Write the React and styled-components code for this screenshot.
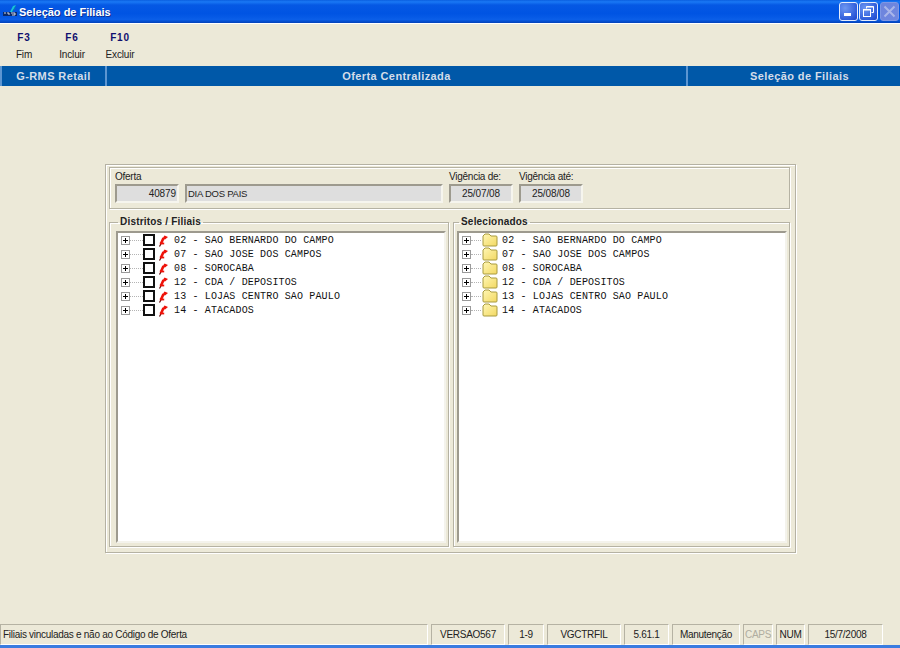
import React from "react";
import styled, { createGlobalStyle } from "styled-components";

const GlobalStyle = createGlobalStyle`
    html, body {
        margin: 0;
        padding: 0;
        background: #ece9d8;
    }
    * {
        box-sizing: border-box;
    }
`;

const Window = styled.div`
    width: 900px;
    height: 648px;
    display: flex;
    flex-direction: column;
    overflow: hidden;
    background: #ece9d8;
    font-family: "Liberation Sans", Arial, sans-serif;
    color: #111;
`;

const TitleBar = styled.div`
    height: 23px;
    flex: none;
    display: flex;
    align-items: center;
    padding: 0 1px 0 2px;
    background: linear-gradient(
        180deg,
        #0a5fe0 0%,
        #1a78f5 8%,
        #0558e4 22%,
        #0054e3 60%,
        #0a5ee8 85%,
        #0341b8 100%
    );
`;

const TitleText = styled.span`
    margin-left: 1px;
    flex: 1;
    color: #fff;
    font-size: 11px;
    font-weight: bold;
    text-shadow: 1px 1px 0 #0f2f90;
`;

const WinButton = styled.div`
    width: 19px;
    height: 19px;
    margin-left: ${props => (props.disabled ? "2px" : "1px")};
    display: flex;
    align-items: center;
    justify-content: center;
    border: 1px solid ${props => (props.disabled ? "#7f97e4" : "#e4ecfc")};
    border-radius: 3px;
    background: ${props =>
        props.disabled
            ? "linear-gradient(135deg, #6d84dc, #7088e0)"
            : "radial-gradient(circle at 30% 30%, #6c97f2, #2a58d8 75%, #2148c4)"};
`;

const Toolbar = styled.div`
    height: 43px;
    flex: none;
    display: flex;
    border-top: 1px solid #fff;
`;

const ToolButton = styled.div`
    width: 48px;
    display: flex;
    flex-direction: column;
    align-items: center;
    padding-top: 7px;
`;

const ToolKey = styled.span`
    height: 18px;
    font-size: 10px;
    line-height: 14px;
    font-weight: bold;
    letter-spacing: 0.8px;
    color: #10106e;
`;

const ToolLabel = styled.span`
    font-size: 10px;
    line-height: 12px;
    letter-spacing: -0.15px;
    color: #222;
`;

const HeaderBar = styled.div`
    height: 20px;
    flex: none;
    display: flex;
    background: #0058a8;
`;

const HeaderCell = styled.div`
    width: ${props => props.width}px;
    display: flex;
    align-items: center;
    justify-content: center;
    padding-left: ${props => (props.last ? "11px" : "0")};
    border-left: ${props => (props.first ? "2px" : "0")} solid #5c96d2;
    border-right: ${props => (props.last ? "0" : "2px")} solid #5c96d2;
    color: #d4dde8;
    font-size: 11px;
    font-weight: bold;
    letter-spacing: 0.4px;
`;

const Content = styled.div`
    flex: 1;
    padding: 78px 104px 0 105px;
`;

const Panel = styled.div`
    height: 389px;
    display: flex;
    flex-direction: column;
    padding: 2px 5px 5px 3px;
    border: 1px solid #b5b2a3;
    box-shadow: inset 1px 1px 0 #fff, 1px 1px 0 #fff;
`;

const TopGroup = styled.div`
    height: 42px;
    flex: none;
    display: flex;
    gap: 6px;
    padding: 2px 0 0 5px;
    border: 1px solid #b5b2a3;
    box-shadow: inset 1px 1px 0 #fff, 1px 1px 0 #fff;
`;

const FieldCol = styled.div`
    display: flex;
    flex-direction: column;
`;

const FieldLabel = styled.span`
    height: 14px;
    font-size: 10px;
    line-height: 13px;
    letter-spacing: -0.25px;
    color: #222;
`;

const FieldRow = styled.div`
    display: flex;
    gap: 6px;
`;

const Input = styled.div`
    width: ${props => props.width}px;
    height: 19px;
    padding: 0 1px;
    display: flex;
    align-items: center;
    justify-content: ${props => props.align || "flex-start"};
    background: #dedede;
    border-style: solid;
    border-width: 2px;
    border-color: #9d9a8e #f6f5ee #f6f5ee #9d9a8e;
    font-size: ${props => (props.tight ? "9.5px" : "10px")};
    letter-spacing: ${props => (props.tight ? "-0.25px" : "-0.1px")};
    color: #222;
`;

const Groups = styled.div`
    flex: 1;
    display: flex;
    gap: 4px;
    margin-top: 7px;
`;

const Group = styled.fieldset`
    width: ${props => props.width}px;
    height: 331px;
    margin: 0;
    padding: 0 2px 2px ${props => props.inset}px;
    min-width: 0;
    border: 1px solid #b5b2a3;
    box-shadow: inset 1px 1px 0 #fff, 1px 1px 0 #fff;
`;

const GroupTitle = styled.legend`
    margin-left: ${props => props.indent}px;
    padding: 0 2px;
    font-size: 10px;
    line-height: 12px;
    font-weight: bold;
    letter-spacing: 0.2px;
    color: #222;
`;

const Tree = styled.div`
    height: 312px;
    margin-top: 3px;
    background: #fff;
    border-style: solid;
    border-width: 2px;
    border-color: #9d9a8e #f4f3ec #f4f3ec #9d9a8e;
`;

const TreeRow = styled.div`
    height: 14px;
    display: flex;
    align-items: center;
    padding-left: 3px;
`;

const Expander = styled.span`
    width: 9px;
    height: 9px;
    flex: none;
    position: relative;
    border: 1px solid #9a9a9a;
    background: #fff;

    &::before {
        content: "";
        position: absolute;
        left: 1px;
        top: 3px;
        width: 5px;
        height: 1px;
        background: #000;
    }

    &::after {
        content: "";
        position: absolute;
        left: 3px;
        top: 1px;
        width: 1px;
        height: 5px;
        background: #000;
    }
`;

const Dots = styled.span`
    width: ${props => props.width}px;
    flex: none;
    border-top: 1px dotted #b4b4b4;
`;

const CheckBox = styled.span`
    width: 12px;
    height: 12px;
    flex: none;
    border: 2px solid #111;
    background: #fff;
`;

const RowText = styled.span`
    margin-left: ${props => props.gap}px;
    font-family: "Liberation Mono", "Courier New", monospace;
    font-size: 10px;
    letter-spacing: 0.15px;
    white-space: pre;
    color: #111;
`;

const StatusBar = styled.div`
    height: 21px;
    flex: none;
    display: flex;
    gap: 3px;
    padding-right: 17px;
`;

const StatusCell = styled.div`
    width: ${props => props.width}px;
    flex: ${props => (props.width ? "none" : 1)};
    display: flex;
    align-items: center;
    justify-content: ${props => (props.left ? "flex-start" : "center")};
    padding-left: ${props => (props.left ? "2px" : "0")};
    border-style: solid;
    border-width: 1px;
    border-color: #b5b2a3 #fff #fff #b5b2a3;
    font-size: 10px;
    letter-spacing: -0.28px;
    white-space: nowrap;
    color: ${props => (props.muted ? "#b0ada0" : "#222")};
`;

const TaskStrip = styled.div`
    height: 3px;
    flex: none;
    background: #3a7ce0;
`;

const AppIcon = () => (
    <svg width="16" height="16" viewBox="0 0 16 16">
        <path d="M7 10 L11 2 L14 1 L10 8 Z" fill="#18c4d8" />
        <path d="M10 8 L14 1 L13 5 Z" fill="#0a7fa8" />
        <rect x="1" y="8" width="14" height="4" fill="#0a2a6a" />
        <path d="M2 9h2M5 9h2v2M9 9h4v2h-3" stroke="#fff" strokeWidth="0.8" fill="none" />
    </svg>
);

const MinimizeIcon = () => (
    <svg width="13" height="13" viewBox="0 0 13 13">
        <rect x="2" y="8" width="7" height="3" fill="#fff" />
    </svg>
);

const RestoreIcon = () => (
    <svg width="13" height="13" viewBox="0 0 13 13" fill="none" stroke="#fff">
        <path d="M4.5 3.5V1.5h7v6h-2" />
        <rect x="1.5" y="4.5" width="7" height="7" />
        <path d="M1.5 5h7M4.5 2h7" strokeWidth="1" />
    </svg>
);

const CloseIcon = () => (
    <svg width="13" height="13" viewBox="0 0 13 13">
        <path d="M1.5 1.5 L11.5 11.5 M11.5 1.5 L1.5 11.5" stroke="#a9b6ea" strokeWidth="2" />
    </svg>
);

const PinIcon = () => (
    <svg width="11" height="13" viewBox="0 0 11 13" style={{ flex: "none", marginLeft: 3 }}>
        <path d="M1.5 12.5 L3.5 9" stroke="#500" strokeWidth="1.2" />
        <path d="M3 9.5 L5.5 4" stroke="#ee1209" strokeWidth="2.6" />
        <path d="M4.5 4.5 L6.5 1.5 L10 3 L7 5.5 Z" fill="#ee1209" />
        <rect x="1.8" y="8.6" width="4.4" height="1.8" fill="#ee1209" />
    </svg>
);

const FolderIcon = () => (
    <svg width="16" height="14" viewBox="0 0 16 14" style={{ flex: "none", marginLeft: 1 }}>
        <defs>
            <linearGradient id="folderFill" x1="0" y1="0" x2="1" y2="1">
                <stop offset="0" stopColor="#fff7b4" />
                <stop offset="1" stopColor="#f2d862" />
            </linearGradient>
        </defs>
        <path
            d="M1 3 L3 1 L7 1 L9 3 L14 3 Q15 3 15 4 L15 12 Q15 13 14 13 L2 13 Q1 13 1 12 Z"
            fill="url(#folderFill)"
            stroke="#a89a3e"
            strokeWidth="1"
        />
    </svg>
);

const tools = [
    { key: "F3", label: "Fim" },
    { key: "F6", label: "Incluir" },
    { key: "F10", label: "Excluir" }
];

const branches = [
    "02 - SAO BERNARDO DO CAMPO",
    "07 - SAO JOSE DOS CAMPOS",
    "08 - SOROCABA",
    "12 - CDA / DEPOSITOS",
    "13 - LOJAS CENTRO SAO PAULO",
    "14 - ATACADOS"
];

const statusCells = [
    { text: "VERSAO567", width: 74 },
    { text: "1-9", width: 36 },
    { text: "VGCTRFIL", width: 74 },
    { text: "5.61.1", width: 45 },
    { text: "Manutenção", width: 68 },
    { text: "CAPS", width: 30, muted: true },
    { text: "NUM", width: 29 },
    { text: "15/7/2008", width: 75 }
];

const App = () => (
    <Window>
        <GlobalStyle />
        <TitleBar>
            <AppIcon />
            <TitleText>Seleção de Filiais</TitleText>
            <WinButton>
                <MinimizeIcon />
            </WinButton>
            <WinButton>
                <RestoreIcon />
            </WinButton>
            <WinButton disabled>
                <CloseIcon />
            </WinButton>
        </TitleBar>
        <Toolbar>
            {tools.map(tool => (
                <ToolButton key={tool.key}>
                    <ToolKey>{tool.key}</ToolKey>
                    <ToolLabel>{tool.label}</ToolLabel>
                </ToolButton>
            ))}
        </Toolbar>
        <HeaderBar>
            <HeaderCell width={107} first>
                G-RMS Retail
            </HeaderCell>
            <HeaderCell width={581}>Oferta Centralizada</HeaderCell>
            <HeaderCell width={212} last>
                Seleção de Filiais
            </HeaderCell>
        </HeaderBar>
        <Content>
            <Panel>
                <TopGroup>
                    <FieldCol>
                        <FieldLabel>Oferta</FieldLabel>
                        <FieldRow>
                            <Input width={64} align="flex-end">
                                40879
                            </Input>
                            <Input width={258} tight>
                                DIA DOS PAIS
                            </Input>
                        </FieldRow>
                    </FieldCol>
                    <FieldCol>
                        <FieldLabel>Vigência de:</FieldLabel>
                        <Input width={64} align="center">
                            25/07/08
                        </Input>
                    </FieldCol>
                    <FieldCol>
                        <FieldLabel>Vigência até:</FieldLabel>
                        <Input width={64} align="center">
                            25/08/08
                        </Input>
                    </FieldCol>
                </TopGroup>
                <Groups>
                    <Group width={340} inset={6}>
                        <GroupTitle indent={2}>Distritos / Filiais</GroupTitle>
                        <Tree>
                            {branches.map(branch => (
                                <TreeRow key={branch}>
                                    <Expander />
                                    <Dots width={13} />
                                    <CheckBox />
                                    <PinIcon />
                                    <RowText gap={5}>{branch}</RowText>
                                </TreeRow>
                            ))}
                        </Tree>
                    </Group>
                    <Group width={337} inset={3}>
                        <GroupTitle indent={2}>Selecionados</GroupTitle>
                        <Tree>
                            {branches.map(branch => (
                                <TreeRow key={branch}>
                                    <Expander />
                                    <Dots width={10} />
                                    <FolderIcon />
                                    <RowText gap={4}>{branch}</RowText>
                                </TreeRow>
                            ))}
                        </Tree>
                    </Group>
                </Groups>
            </Panel>
        </Content>
        <StatusBar>
            <StatusCell left>Filiais vinculadas e não ao Código de Oferta</StatusCell>
            {statusCells.map(cell => (
                <StatusCell key={cell.text} width={cell.width} muted={cell.muted}>
                    {cell.text}
                </StatusCell>
            ))}
        </StatusBar>
        <TaskStrip />
    </Window>
);

export default App;
